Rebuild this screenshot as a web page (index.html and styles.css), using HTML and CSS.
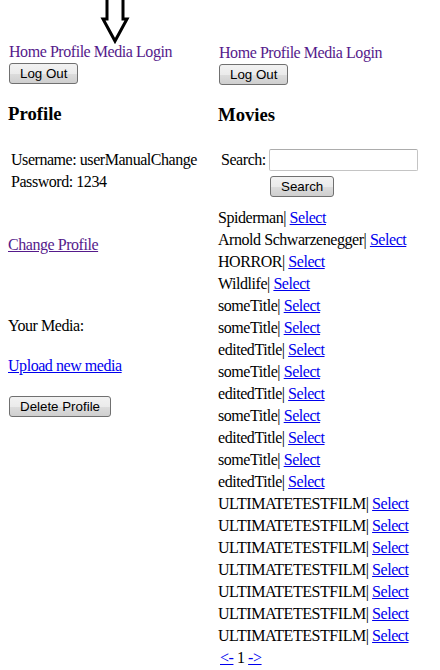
FILE: index.html
```html
<!DOCTYPE html>
<html>
<head>
<meta charset="utf-8">
<link rel="stylesheet" href="styles.css">
</head>
<body>
<svg class="arrow" width="32" height="46" viewBox="0 0 32 46"><polyline points="7,-3 7,19 3,19 15,41 27,19 23,19 23,-3" fill="#fff" stroke="#000" stroke-width="3" stroke-miterlimit="10"/></svg>
<div class="page">
  <div class="panel panel-left">
    <nav class="nav"><a href="#">Home</a> <a href="#">Profile</a> <a href="#">Media</a> <a href="#">Login</a></nav>
    <button class="btn btn-logout">Log Out</button>
    <h3 class="title">Profile</h3>
    <table class="info">
      <tr><td>Username: userManualChange</td></tr>
      <tr><td>Password: 1234</td></tr>
    </table>
    <div class="line change"><a class="visited" href="#">Change Profile</a></div>
    <div class="line media">Your Media:</div>
    <div class="line upload"><a class="unvisited" href="#">Upload new media</a></div>
    <button class="btn btn-delete">Delete Profile</button>
  </div>
  <div class="panel panel-right">
    <nav class="nav"><a href="#">Home</a> <a href="#">Profile</a> <a href="#">Media</a> <a href="#">Login</a></nav>
    <button class="btn btn-logout">Log Out</button>
    <h3 class="title">Movies</h3>
    <div class="search">
      <label class="search-label">Search:</label>
      <input class="search-input" type="text">
      <span></span>
      <button class="btn btn-search">Search</button>
    </div>
    <ul class="movies">
      <li>Spiderman| <a href="#">Select</a></li>
      <li>Arnold Schwarzenegger| <a href="#">Select</a></li>
      <li>HORROR| <a href="#">Select</a></li>
      <li>Wildlife| <a href="#">Select</a></li>
      <li>someTitle| <a href="#">Select</a></li>
      <li>someTitle| <a href="#">Select</a></li>
      <li>editedTitle| <a href="#">Select</a></li>
      <li>someTitle| <a href="#">Select</a></li>
      <li>editedTitle| <a href="#">Select</a></li>
      <li>someTitle| <a href="#">Select</a></li>
      <li>editedTitle| <a href="#">Select</a></li>
      <li>someTitle| <a href="#">Select</a></li>
      <li>editedTitle| <a href="#">Select</a></li>
      <li>ULTIMATETESTFILM| <a href="#">Select</a></li>
      <li>ULTIMATETESTFILM| <a href="#">Select</a></li>
      <li>ULTIMATETESTFILM| <a href="#">Select</a></li>
      <li>ULTIMATETESTFILM| <a href="#">Select</a></li>
      <li>ULTIMATETESTFILM| <a href="#">Select</a></li>
      <li>ULTIMATETESTFILM| <a href="#">Select</a></li>
      <li>ULTIMATETESTFILM| <a href="#">Select</a></li>
      <li class="pager"><a href="#">&lt;-</a> 1 <a href="#">-&gt;</a></li>
    </ul>
  </div>
</div>
</body>
</html>
```

FILE: styles.css
```css
html, body {
  margin: 0;
  padding: 0;
  background: #fff;
}
body {
  font-family: "Liberation Serif", "Times New Roman", serif;
  font-size: 16px;
  letter-spacing: -0.45px;
  color: #000;
  position: relative;
  width: 440px;
  height: 670px;
  overflow: hidden;
}
.arrow {
  position: absolute;
  left: 100px;
  top: 0;
}
.page {
  display: flex;
}
.panel {
  width: 202px;
  padding-left: 8px;
  display: flex;
  flex-direction: column;
  align-items: flex-start;
}
.panel-left { padding-top: 43px; }
.panel-right { padding-top: 44px; width: 222px; }
.nav {
  line-height: 18px;
  white-space: nowrap;
  padding-left: 1px;
}
.nav a {
  color: #551a8b;
  text-decoration: none;
}
.btn {
  font-family: "Liberation Sans", Arial, sans-serif;
  font-size: 13.33px;
  letter-spacing: 0;
  color: #000;
  height: 21px;
  margin-left: 1px;
  padding: 0 10px;
  border: 1px solid #707070;
  border-radius: 3px;
  background: linear-gradient(#f2f2f2 0%, #ebebeb 50%, #dddddd 51%, #cfcfcf 100%);
  line-height: 19px;
  box-sizing: border-box;
}
.btn-logout { margin-top: 2px; }
.title {
  margin: 19px 0 0 0;
  font-size: 18.72px;
  letter-spacing: 0;
  line-height: 22px;
  font-weight: bold;
}
.info {
  margin-top: 23px;
  border-spacing: 2px;
}
.info td {
  padding: 1px;
  line-height: 18px;
  white-space: nowrap;
}
.line { line-height: 18px; }
.change { margin-top: 42px; }
.media { margin-top: 63px; }
.upload { margin-top: 22px; }
.visited { color: #551a8b; }
.unvisited { color: #0000ee; }
.btn-delete { margin-top: 21px; }

.search {
  margin-top: 23px;
  display: grid;
  grid-template-columns: 51px auto;
  row-gap: 5px;
  align-items: center;
}
.search-label {
  padding-left: 3px;
  line-height: 18px;
}
.search-input {
  width: 149px;
  height: 22px;
  box-sizing: border-box;
  border: 1px solid #c4c4c4;
  border-top-color: #acacac;
  border-radius: 2px;
  margin: 0;
  padding: 0 2px;
  font-family: "Liberation Sans", Arial, sans-serif;
  font-size: 13.33px;
  background: #fff;
}
.btn-search {
  justify-self: start;
  margin-left: 1px;
  padding: 0 10px;
}
.movies {
  list-style: none;
  margin: 10px 0 0 0;
  padding: 0;
}
.movies li {
  line-height: 22px;
  white-space: nowrap;
}
.movies a { color: #0000ee; }
.pager { padding-left: 2px; }
```
